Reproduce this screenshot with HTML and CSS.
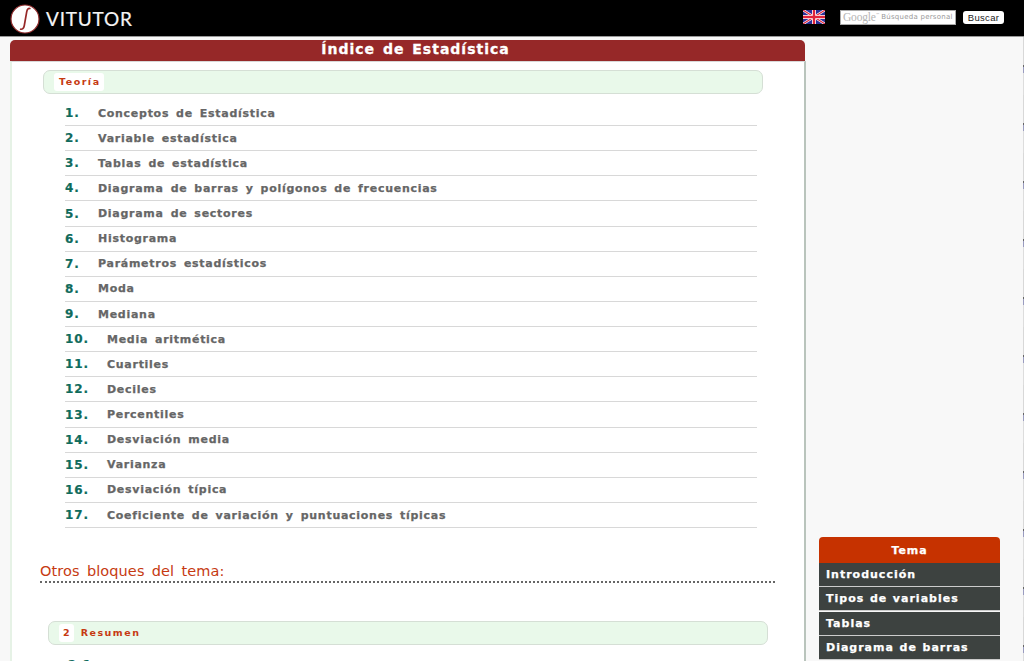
FILE: index.html
```html
<!DOCTYPE html>
<html lang="es">
<head>
<meta charset="utf-8">
<title>Índice de Estadística</title>
<link rel="stylesheet" href="styles.css">
</head>
<body>
<header class="top">
  <div class="brand">
    <svg class="logo" width="30" height="30" viewBox="0 0 30 30"><circle cx="15" cy="15" r="14" fill="#fff" stroke="#8e2a2a" stroke-width="1.2"/><path d="M20.500 4.800c-2-1-3.300 0-3.800 3L14.300 21.500c-.5 3-2 4.300-4.300 3.500" fill="none" stroke="#962828" stroke-width="1.700"/></svg>
    <span class="brand-name">VITUTOR</span>
  </div>
  <div class="tools">
    <svg class="flag" width="22" height="14" viewBox="0 0 22 14"><rect width="22" height="14" fill="#2b2f9a"/><path d="M0 0l22 14M22 0L0 14" stroke="#fff" stroke-width="2.400"/><path d="M0 0l22 14M22 0L0 14" stroke="#e0243c" stroke-width="1.100"/><path d="M11 0v14M0 7h22" stroke="#fff" stroke-width="4"/><path d="M11 0v14M0 7h22" stroke="#e0243c" stroke-width="2.400"/></svg>
    <div class="search"><span class="g">Google</span><span class="tm">™</span><span class="ph">Búsqueda personal</span></div>
    <div class="btn">Buscar</div>
  </div>
</header>
<div class="page">
  <main class="main">
    <h1 class="title">Índice de Estadística</h1>
    <div class="card">
      <div class="block"><span class="tag">Teoría</span></div>
      <ol class="list">
        <li><b>1.</b><a>Conceptos de Estadística</a></li>
        <li><b>2.</b><a>Variable estadística</a></li>
        <li><b>3.</b><a>Tablas de estadística</a></li>
        <li><b>4.</b><a>Diagrama de barras y polígonos de frecuencias</a></li>
        <li><b>5.</b><a>Diagrama de sectores</a></li>
        <li><b>6.</b><a>Histograma</a></li>
        <li><b>7.</b><a>Parámetros estadísticos</a></li>
        <li><b>8.</b><a>Moda</a></li>
        <li><b>9.</b><a>Mediana</a></li>
        <li class="wide"><b>10.</b><a>Media aritmética</a></li>
        <li class="wide"><b>11.</b><a>Cuartiles</a></li>
        <li class="wide"><b>12.</b><a>Deciles</a></li>
        <li class="wide"><b>13.</b><a>Percentiles</a></li>
        <li class="wide"><b>14.</b><a>Desviación media</a></li>
        <li class="wide"><b>15.</b><a>Varianza</a></li>
        <li class="wide"><b>16.</b><a>Desviación típica</a></li>
        <li class="wide"><b>17.</b><a>Coeficiente de variación y puntuaciones típicas</a></li>
      </ol>
      <h2 class="others">Otros bloques del tema:</h2>
      <div class="block second"><span class="tag num">2</span><span class="tag-text">Resumen</span></div>
      <ol class="list next">
        <li><b>2.1.</b><a>Resumen</a></li>
      </ol>
    </div>
  </main>
  <aside class="side">
    <div class="side-head">Tema</div>
    <a class="side-item">Introducción</a>
    <a class="side-item">Tipos de variables</a>
    <a class="side-item">Tablas</a>
    <a class="side-item">Diagrama de barras</a>
  </aside>
</div>
<div class="edge"></div>
</body>
</html>
```
FILE: styles.css
```css
html, body { margin: 0; padding: 0; height: 661px; overflow: hidden; }
body { background: #f8f8f8; font-family: "DejaVu Sans", Verdana, sans-serif; position: relative; }
.top { height: 36px; background: #000; border-bottom: 1px solid #999; display: flex; justify-content: space-between; align-items: center; padding: 0 20px 0 10px; }
.brand { display: flex; align-items: center; gap: 6px; margin-top: 1px; }
.logo { display: block; }
.brand-name { color: #f4f4f4; font-family: Lato, sans-serif; font-size: 19px; letter-spacing: 0.800px; -webkit-text-stroke: 0.200px #f4f4f4; }
.tools { display: flex; align-items: center; margin-top: -2px; }
.flag { display: block; margin-right: 15px; }
.search { width: 114px; height: 13px; background: #fff; border: 1px solid #aaa; display: flex; align-items: center; overflow: hidden; white-space: nowrap; margin-right: 7px; }
.g { font-family: "Liberation Serif", serif; font-size: 11.500px; letter-spacing: -0.200px; color: #b5b5b5; margin-left: 2px; }
.tm { font-size: 4px; color: #aaa; margin: -5px 1.500px 0 0; }
.ph { font-size: 7px; letter-spacing: 0.250px; color: #999; }
.btn { width: 41px; height: 13px; background: #fff; border-radius: 3px; color: #222; font: 9.500px/13px "Liberation Sans", sans-serif; text-align: center; letter-spacing: 0.300px; margin-top: 1px; }
.page { display: flex; align-items: flex-start; padding: 3px 0 0 10px; }
.main { width: 796px; flex: none; }
.title { margin: 0 1px 0 0; height: 21px; background: #962828; border-radius: 5px 5px 0 0; color: #fff; text-align: center; font-size: 14px; line-height: 18px; letter-spacing: 1px; word-spacing: 2px; font-weight: bold; padding-left: 16px; box-sizing: border-box; -webkit-text-stroke: 0.300px #fff; }
.card { background: #fff; border-left: 2px solid #e6f2e6; border-right: 2px solid #b9c4bc; border-top: 1px solid #d8d8d8; height: 600px; box-sizing: border-box; padding: 8px 0 0 31px; }
.block { width: 720px; height: 24px; box-sizing: border-box; background: #e9f9ea; border: 1px solid #d5dfd5; border-radius: 7px; display: flex; align-items: center; padding-left: 10px; }
.tag { background: #fff; border-radius: 3px; color: #c63a12; font-size: 9.500px; font-weight: bold; letter-spacing: 1.500px; line-height: 18px; padding: 0 3px 0 5px; }
.tag-text { color: #c63a12; font-size: 9.500px; font-weight: bold; letter-spacing: 1.500px; margin: -1px 0 0 7px; }
.list { list-style: none; margin: 7px 0 0 22px; padding: 0; width: 692px; }
.list li { height: 24px; border-bottom: 1px solid #d8d8d8; margin-bottom: 0.125px; display: flex; align-items: center; white-space: nowrap; }
.list b { width: 33px; flex: none; color: #0f6b5c; font-size: 12px; letter-spacing: 0.900px; -webkit-text-stroke: 0.200px #0f6b5c; }
.list .wide b { width: 42px; }
.list a { color: #666; font-size: 11px; font-weight: bold; letter-spacing: 0.720px; word-spacing: 2.400px; -webkit-text-stroke: 0.250px #666; }
.others { margin: 33px 0 0 -3px; width: 735px; height: 20px; border-bottom: 2px dotted #666; color: #c63a12; font-size: 14.500px; line-height: 20px; font-weight: normal; letter-spacing: 0.100px; word-spacing: 2.500px; }
.second { margin: 38px 0 0 5px; }
.second .num { padding: 0 4px; letter-spacing: 0; }
.next { margin-top: 8px; }
.next li { border: 0; }
.next b { width: 42px; margin-left: 3px; }
.side { width: 181px; flex: none; margin: 497px 0 0 13px; }
.side-head { height: 26px; background: #c63200; border-radius: 4px 4px 0 0; color: #fff; text-align: center; font-size: 11px; font-weight: bold; line-height: 27px; letter-spacing: 0.900px; -webkit-text-stroke: 0.250px #fff; }
.side-item { display: block; height: 23px; background: #3d4240; border-bottom: 1px solid #ccc; margin-bottom: 0.400px; color: #fff; font-size: 11px; font-weight: bold; line-height: 23px; letter-spacing: 1px; word-spacing: 0.800px; padding-left: 7px; white-space: nowrap; -webkit-text-stroke: 0.250px #fff; }
.edge { position: absolute; top: 37px; right: 0; bottom: 0; width: 1px; background: repeating-linear-gradient(#d8d8d8 0 28px, #666 28px 30px, #9a9cc0 30px 36px, #ddd 36px 58px); }
```
